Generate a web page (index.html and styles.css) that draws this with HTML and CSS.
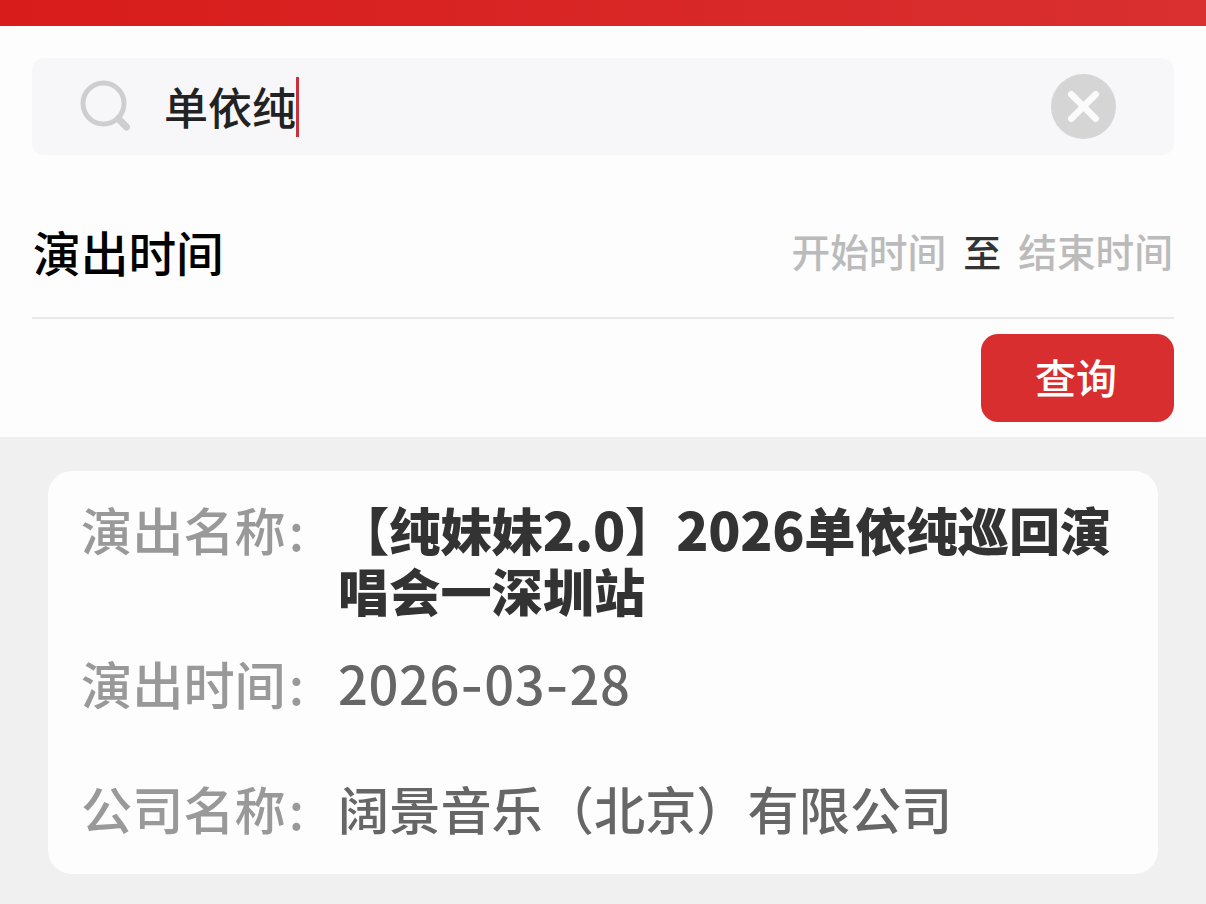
FILE: index.html
```html
<!DOCTYPE html>
<html lang="zh-CN">
<head>
  <meta charset="UTF-8">
  <title>演出查询</title>
  <link rel="stylesheet" href="styles.css">
</head>
<body>
  <div class="topbar"></div>
  <form class="search-panel">
    <div class="search-box">
      <svg class="search-icon" viewBox="0 0 54 54">
        <circle cx="23.5" cy="23.5" r="20.5"/>
        <path d="M38 38l3 3"/>
        <path class="handle" d="M40 40.500l6.500 6.500"/>
      </svg>
      <span class="keyword">单依纯</span>
      <span class="cursor"></span>
      <svg class="clear-icon" viewBox="0 0 64 64">
        <circle cx="32" cy="32" r="32"/>
        <path d="M20 20l24 24M44 20L20 44"/>
      </svg>
    </div>
    <div class="date-row">
      <span class="date-title">演出时间</span>
      <span class="date-hint">开始时间</span>
      <span class="date-to">至</span>
      <span class="date-hint">结束时间</span>
    </div>
    <div class="actions">
      <button type="button" class="query-btn">查询</button>
    </div>
  </form>

  <div class="card">
    <div class="row row-name">
      <span class="label">演出名称<span class="colon">:</span></span>
      <span class="value name">【纯妹妹<span class="num">2.0</span>】<span class="num">2026</span>单依纯巡回演<br>唱会一深圳站</span>
    </div>
    <div class="row row-time">
      <span class="label">演出时间<span class="colon">:</span></span>
      <span class="value date">2026<span class="dash">-</span>03<span class="dash">-</span>28</span>
    </div>
    <div class="row">
      <span class="label">公司名称<span class="colon">:</span></span>
      <span class="value">阔景音乐（北京）有限公司</span>
    </div>
  </div>
</body>
</html>
```
FILE: styles.css
```css
* {
  box-sizing: border-box;
}

body {
  margin: 0;
  height: 904px;
  overflow: hidden;
  background-color: #f0f0f0;
  font-family: "Noto Sans CJK SC", sans-serif;
}

.topbar {
  height: 26px;
  background: linear-gradient(90deg, #d81c1b, #d93030);
}

.search-panel {
  height: 411px;
  padding: 32px 32px 0;
  background-color: #fdfdfd;
}

.search-box {
  display: flex;
  align-items: center;
  height: 97px;
  padding: 0 58px 0 48px;
  border-radius: 12px;
  background-color: #f7f7f9;
}

.search-icon {
  width: 54px;
  height: 54px;
  margin-right: 30px;
  fill: none;
  stroke: #cecece;
  stroke-width: 5;
  stroke-linecap: round;
}

.search-icon .handle {
  stroke-width: 7;
}

.keyword {
  padding-bottom: 2px;
  font-size: 44px;
  font-weight: 500;
  line-height: 60px;
  color: #222;
}

.cursor {
  width: 3px;
  height: 60px;
  background-color: #c83238;
}

.clear-icon {
  width: 65px;
  height: 65px;
  margin-left: auto;
  margin-bottom: 1px;
  fill: #d5d5d6;
}

.clear-icon path {
  stroke: #fbfbfb;
  stroke-width: 6.5;
  stroke-linecap: round;
}

.date-row {
  display: flex;
  align-items: center;
  height: 164px;
  padding-top: 28px;
  border-bottom: 2px solid #e9e9e9;
}

.date-title {
  margin-right: auto;
  padding: 2px 0 0 1px;
  font-size: 47.7px;
  font-weight: 500;
  color: #000;
}

.date-hint {
  font-size: 38.7px;
  font-weight: 500;
  color: #bbb;
}

.date-hint:last-child {
  margin-right: 1px;
}

.date-to {
  margin: 0 17px;
  font-size: 38px;
  font-weight: 500;
  color: #333;
}

.actions {
  display: flex;
  justify-content: flex-end;
  padding-top: 15px;
}

.query-btn {
  width: 193px;
  height: 88px;
  padding: 0 3px 4px 0;
  border: none;
  border-radius: 17px;
  background-color: #d82e2f;
  color: #fff;
  font-family: inherit;
  font-size: 41px;
  font-weight: 500;
}

.card {
  height: 403px;
  margin: 34px 48px 0;
  padding: 28px 33px 0;
  border-radius: 24px;
  background-color: #fdfdfd;
}

.row {
  display: flex;
  font-size: 51.2px;
  font-weight: 500;
  line-height: 61px;
  white-space: nowrap;
}

.row-name {
  height: 154px;
}

.row-time {
  height: 125px;
}

.label {
  width: 257px;
  color: #999;
}

.colon {
  margin-left: 3px;
}

.value {
  color: #666;
}

.name {
  font-weight: 900;
  color: #333;
}

.date {
  font-size: 52.5px;
  line-height: 58px;
  letter-spacing: 0.6px;
}

.dash {
  font-family: Inter, sans-serif;
  font-size: 51px;
  line-height: 40px;
}

.num {
  font-size: 53px;
  line-height: 40px;
  letter-spacing: -0.3px;
}
```
